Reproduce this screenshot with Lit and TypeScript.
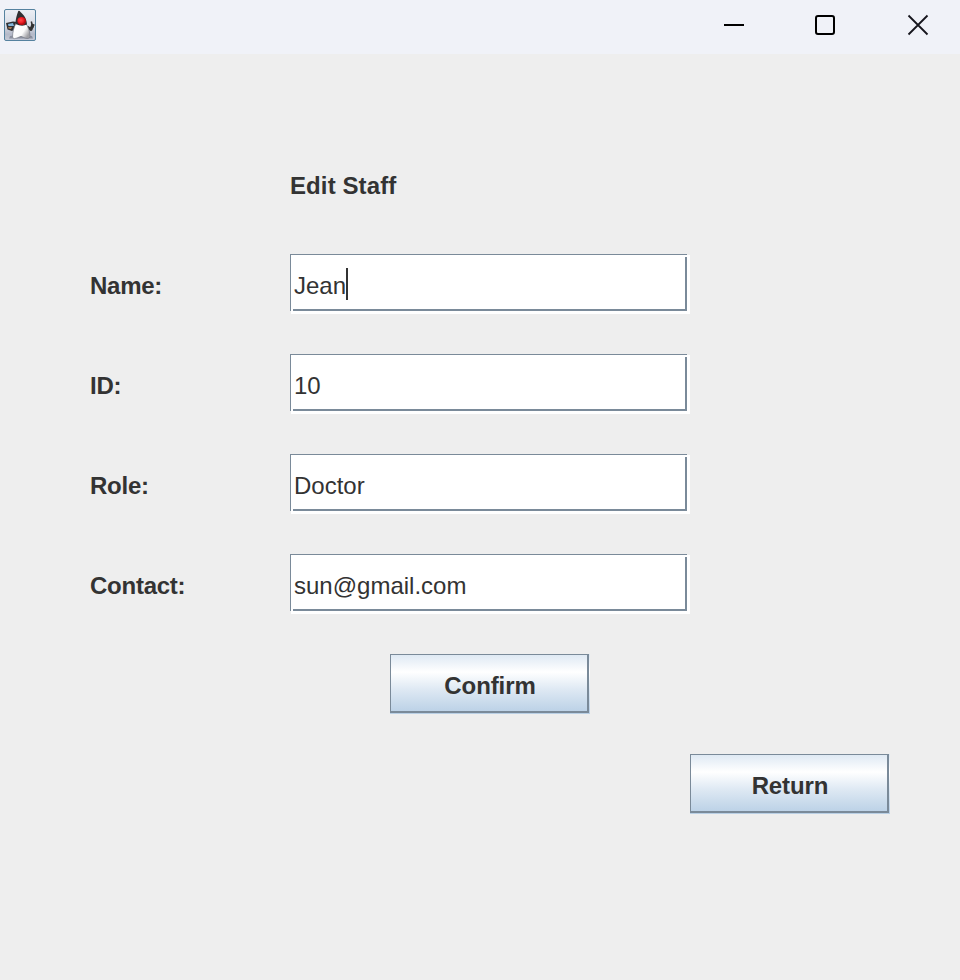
import { LitElement, html, css } from "lit";
import { customElement, property } from "lit/decorators.js";

@customElement("duke-icon")
class DukeIcon extends LitElement {
  static styles = css`
    :host { display: block; width: 32px; height: 32px; }
    svg { display: block; }
  `;
  render() {
    return html`<svg width="32" height="32" viewBox="0 0 32 32">
      <defs>
        <linearGradient id="bg" x1="0" y1="0" x2="0" y2="1">
          <stop offset="0" stop-color="#eceff5" /><stop offset=".5" stop-color="#d8dce6" /><stop offset=".8" stop-color="#b4b9c8" /><stop offset="1" stop-color="#c6cbd8" />
        </linearGradient>
        <linearGradient id="belly" x1="0" y1="0" x2="1" y2=".6">
          <stop offset="0" stop-color="#d5d5d7" /><stop offset=".25" stop-color="#ffffff" /><stop offset=".7" stop-color="#fafafa" /><stop offset="1" stop-color="#a0a0a5" />
        </linearGradient>
        <radialGradient id="nose" cx=".4" cy=".4">
          <stop offset="0" stop-color="#ff4a4a" /><stop offset=".65" stop-color="#ee1c24" /><stop offset="1" stop-color="#b00d12" />
        </radialGradient>
      </defs>
      <rect x=".5" y=".5" width="31" height="31" rx="1.5" fill="url(#bg)" stroke="#55829f" />
      <path d="M6 27 Q14 25 28 27 L29 29.5 H5Z" fill="#6b7080" opacity=".6" />
      <path d="M2 14 L9 12.5 L13 13 L11 20 L8 22 L3.5 20.5Z" fill="#303033" />
      <path d="M4 15 L9 14 L10 17 L4.5 17Z" fill="#83b7dd" />
      <path d="M4 18.2 L8 18 L7 20 L4.5 19.5Z" fill="#b58154" />
      <path d="M23 18 L27 20.5 L29 15" fill="none" stroke="#333" stroke-width="3" stroke-linejoin="round" />
      <path d="M27.3 12.5 L28.2 16 M30 15.5 L28.5 19" stroke="#333" stroke-width="1.5" />
      <path d="M12 14 C10 18 8.5 23 8.5 28.5 Q10 30.5 13 29 L17 27.3 L21 29 Q25 30.5 26 27.5 C26 23 24.5 18 21.5 14Z" fill="url(#belly)" stroke="#777b86" stroke-width=".7" />
      <path d="M14.3 2 Q15.3 1.2 16.5 3 C20 6 22.8 10 23 15.5 Q18 18 11.5 15 C11.5 10 12.8 6 14.3 2Z" fill="#303033" />
      <ellipse cx="17.7" cy="12" rx="4.4" ry="4.1" fill="url(#nose)" />
    </svg>`;
  }
}

@customElement("title-bar")
class TitleBar extends LitElement {
  static styles = css`
    :host { display: flex; justify-content: space-between; height: 54px; background: #f0f2f8; box-sizing: border-box; padding: 9px 31px 0 4px; }
    .controls { display: flex; gap: 70px; padding-top: 5px; }
    svg { display: block; }
  `;
  render() {
    return html`
      <duke-icon></duke-icon>
      <div class="controls">
        <svg width="22" height="22" viewBox="0 0 22 22"><rect x="1" y="10" width="20" height="2" /></svg>
        <svg width="22" height="22" viewBox="0 0 22 22"><rect x="1" y="2" width="18" height="18" rx="2" fill="none" stroke="#000" stroke-width="2" /></svg>
        <svg width="22" height="22" viewBox="0 0 22 22"><path d="M1.5 1.5 L20.5 20.5 M20.5 1.5 L1.5 20.5" stroke="#15151c" stroke-width="1.8" /></svg>
      </div>`;
  }
}

@customElement("metal-field")
class MetalField extends LitElement {
  @property() value = "";
  @property({ type: Boolean }) caret = false;
  static styles = css`
    :host {
      display: flex; align-items: center; box-sizing: border-box; width: 400px; height: 60px; padding: 4px 4px 0;
      color: #333;
      background:
        linear-gradient(#7a8a99, #7a8a99) 0 0 / 397px 1px,
        linear-gradient(#7a8a99, #7a8a99) 0 0 / 1px 57px,
        linear-gradient(#7a8a99, #7a8a99) 395px 3px / 2px 54px,
        linear-gradient(#7a8a99, #7a8a99) 3px 55px / 394px 2px,
        linear-gradient(#eee, #eee) 397px 0 / 3px 1px,
        linear-gradient(#eee, #eee) 0 57px / 1px 3px,
        #fff;
      background-repeat: no-repeat;
    }
    .caret { width: 2px; height: 32px; background: #333; margin-top: -4px; }
  `;
  render() {
    return html`<span>${this.value}</span>${this.caret ? html`<span class="caret"></span>` : null}`;
  }
}

@customElement("metal-button")
class MetalButton extends LitElement {
  static styles = css`
    :host { display: block; width: 200px; height: 60px; box-sizing: border-box; padding: 0 1px 1px 0;
      background: linear-gradient(#dde8f3, #fff 30%, #dde8f3 60%, #b8cfe5); }
    .face { display: flex; align-items: center; justify-content: center; box-sizing: border-box; height: 59px; padding: 5px 0 0 2px;
      border: solid #7a8a99; border-width: 1px 2px 2px 1px; color: #333; font-weight: bold; letter-spacing: -.1px; }
  `;
  render() {
    return html`<div class="face"><slot></slot></div>`;
  }
}

@customElement("app-root")
class AppRoot extends LitElement {
  static styles = css`
    :host { display: block; height: 980px; background: #eee; color: #333; font: 24px/28px "Liberation Sans", Arial, sans-serif; overflow: hidden; }
    .form { display: grid; grid-template-columns: 200px 400px; grid-auto-rows: 60px; row-gap: 40px; padding: 100px 0 0 90px; }
    .label { display: flex; align-items: center; padding-top: 3px; font-weight: bold; letter-spacing: -.25px; }
    .heading { grid-column: 2; letter-spacing: .1px; }
    .actions { display: flex; flex-direction: column; align-items: flex-end; gap: 40px; padding: 40px 70px 0 0; }
    .confirm { margin-right: 300px; }
  `;
  rows = [
    ["Name:", "Jean"],
    ["ID:", "10"],
    ["Role:", "Doctor"],
    ["Contact:", "sun@gmail.com"],
  ];
  render() {
    return html`
      <title-bar></title-bar>
      <div class="form">
        <div class="label heading">Edit Staff</div>
        ${this.rows.map(([label, value], i) => html`
          <div class="label">${label}</div>
          <metal-field .value=${value} .caret=${i === 0}></metal-field>`)}
      </div>
      <div class="actions">
        <metal-button class="confirm">Confirm</metal-button>
        <metal-button>Return</metal-button>
      </div>`;
  }
}
